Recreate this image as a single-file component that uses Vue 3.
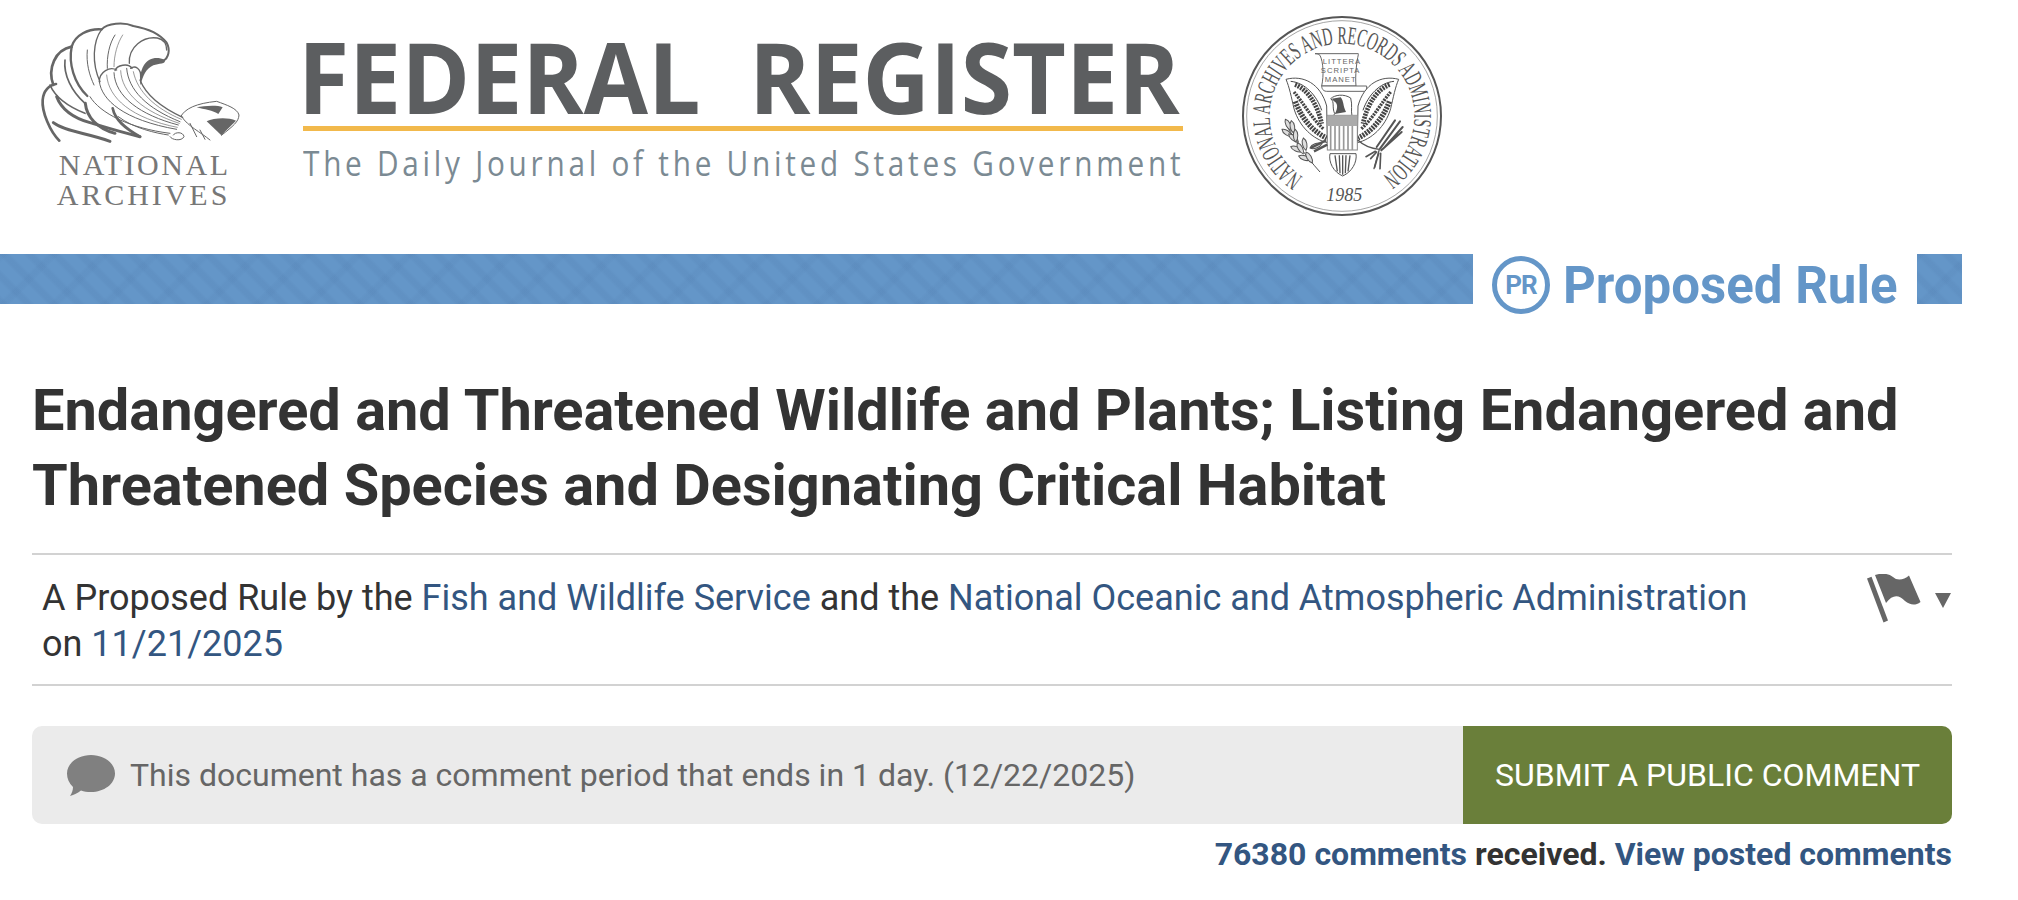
<script setup>
const leaves = [
  [196, 322, 62], [186, 352, 35], [214, 326, 80], [206, 366, 40], [226, 352, 88],
  [212, 404, 22], [232, 392, 62], [250, 378, 78], [236, 432, 18], [258, 420, 60], [270, 408, -20],
];
</script>

<template>
  <div class="page">
    <header class="masthead">
      <svg class="archives" viewBox="0 0 900 720" role="img" aria-label="National Archives">
        <g fill="none" stroke="#666" stroke-linecap="round" stroke-linejoin="round">
          <path stroke-width="8" d="M178 422C150 395 125 335 128 300C130 272 148 255 168 252" />
          <path stroke-width="8" d="M160 255C142 205 165 150 215 140" />
          <path stroke-width="7" d="M215 140C225 105 265 85 305 88" />
          <path stroke-width="6" d="M305 88C322 70 370 65 400 78C440 85 478 100 500 128C512 150 505 175 490 182" />
          <path stroke-width="4" d="M388 190C385 140 430 108 472 114C490 118 500 132 500 150" />
          <path stroke-width="7" d="M215 140C205 190 222 250 262 288" />
          <path stroke-width="5" d="M195 180C190 225 215 275 255 310" />
          <path stroke-width="5" d="M150 255C165 290 205 320 255 340" />
          <path stroke-width="9" d="M170 290C185 330 225 355 270 368C305 378 345 392 420 410" />
          <path stroke-width="9" d="M160 368C195 395 260 398 330 424" />
          <path stroke-width="9" d="M256 310C260 350 290 385 345 400" />
          <path stroke-width="8" d="M338 325C345 360 375 385 420 410" />
          <path stroke-width="4" d="M305 88C278 125 275 190 300 245" />
          <path stroke-width="3" d="M262 150C258 190 268 225 282 255" />
          <path stroke-width="3" d="M345 105C328 130 320 170 322 205" />
          <path stroke-width="2" d="M368 105C352 130 342 165 342 200" />
          <path stroke-width="4" d="M298 245C298 215 330 198 350 210" />
          <path stroke-width="4" d="M345 212C350 195 385 188 396 205" />
          <path stroke-width="4" d="M392 205C405 195 424 205 422 232" />
          <path stroke-width="3" d="M298 245C305 300 370 360 530 388" />
          <path stroke-width="2" d="M320 225C325 295 395 355 532 382" />
          <path stroke-width="3" d="M342 218C345 290 420 345 535 375" />
          <path stroke-width="2" d="M362 212C365 280 430 335 538 370" />
          <path stroke-width="3" d="M380 205C385 270 440 325 540 365" />
          <path stroke-width="2" d="M400 215C412 275 465 325 544 358" />
          <path stroke-width="4" d="M420 240C440 290 490 325 548 352" />
          <path stroke-width="3" d="M270 290C300 340 390 385 510 400" />
          <path stroke-width="3" d="M355 350C400 385 470 400 505 405" />
          <path stroke-width="3" d="M520 405C525 395 550 395 552 410C545 425 515 420 510 410" />
          <path fill="#666" stroke="none" d="M494 180C470 168 445 175 432 195C420 215 418 240 422 256C428 228 438 206 460 196C476 190 500 192 494 180Z" />
          <path stroke-width="3" d="M542 350C555 325 590 310 650 304C680 315 712 325 717 345C716 365 700 378 664 406" />
          <path fill="#666" stroke="none" d="M620 364C640 354 682 350 708 362L664 406Z" />
          <path fill="#666" stroke="none" d="M590 322C610 318 650 314 668 322L655 342C640 332 612 328 590 322Z" />
          <path stroke-width="3" d="M545 350C565 380 600 395 630 420M570 370L590 410M600 390L615 418" />
        </g>
        <text class="arch-text" x="430" y="525" text-anchor="middle" textLength="508" lengthAdjust="spacing">NATIONAL</text>
        <text class="arch-text" x="426" y="615" text-anchor="middle" textLength="512" lengthAdjust="spacing">ARCHIVES</text>
      </svg>

      <div class="wordmark">
        <div class="fr-title">FEDERAL&nbsp; REGISTER</div>
        <div class="fr-rule"></div>
        <div class="fr-tag">The Daily Journal of the United States Government</div>
      </div>

      <svg class="seal" viewBox="0 0 720 660" role="img" aria-label="National Archives and Records Administration seal">
        <defs>
          <path id="sealArc" d="M249.400 495A217 217 0 1 1 482.600 495" />
          <path id="sealLeaf" d="M0 0C8-9 28-9 38 0C28 9 8 9 0 0Z" />
          <g id="sealWing">
            <path fill="#fff" stroke="#555" stroke-width="3" d="M198 202C250 188 302 215 320 282L322 392C280 382 238 345 222 290C214 255 208 225 198 202Z" />
            <g fill="none" stroke="#444">
              <path stroke-width="14" stroke-dasharray="6 3" d="M225 218C262 232 292 275 305 335" />
              <path stroke-width="16" stroke-dasharray="6 3" d="M226 268C245 320 278 358 320 378" />
              <path stroke-width="10" stroke-dasharray="6 3" d="M222 240C250 272 275 320 312 352" />
              <path stroke-width="3" d="M212 208C255 212 290 250 305 295" />
            </g>
          </g>
        </defs>
        <circle cx="366" cy="312" r="297" fill="#fff" stroke="#555" stroke-width="6" />
        <circle cx="366" cy="312" r="286" fill="none" stroke="#777" stroke-width="2" />
        <text class="seal-ring"><textPath href="#sealArc" textLength="1112" lengthAdjust="spacingAndGlyphs">NATIONAL ARCHIVES AND RECORDS ADMINISTRATION</textPath></text>
        <text class="seal-year" x="373" y="568" text-anchor="middle">1985</text>

        <path fill="#fff" stroke="#666" stroke-width="3" d="M285 125H415V128C410 150 405 190 408 222H305C312 190 310 150 300 130C295 126 290 125 285 125Z" />
        <path fill="#fff" stroke="#666" stroke-width="3" d="M305 222H440V238H320C305 238 305 222 305 222Z" />
        <text class="scroll" x="366" y="156" text-anchor="middle">LITTERA</text>
        <text class="scroll" x="362" y="183" text-anchor="middle">SCRIPTA</text>
        <text class="scroll" x="362" y="210" text-anchor="middle">MANET</text>

        <use href="#sealWing" />
        <use href="#sealWing" transform="translate(734 0) scale(-1 1)" />

        <path fill="#fff" stroke="#555" stroke-width="3" d="M344 305C335 285 345 270 332 260C345 248 372 245 392 258C398 280 392 295 396 312H340Z" />
        <path fill="#555" d="M335 260L362 256C372 268 368 280 378 300L344 306C356 288 352 272 342 268Z" />

        <rect x="322" y="310" width="90" height="104" fill="#fff" stroke="#888" stroke-width="3" />
        <rect x="322" y="310" width="90" height="32" fill="#aaa" />
        <g stroke="#999" stroke-width="5">
          <path d="M332 342V414M345 342V414M358 342V414M371 342V414M384 342V414M397 342V414" />
        </g>

        <g fill="#fff" stroke="#555" stroke-width="3">
          <path d="M330 425C325 450 340 480 368 492C396 480 412 450 408 425Z" />
          <path fill="none" stroke-width="4" d="M345 430L352 478M368 430V488M390 430L384 478M358 430L360 484M378 430L376 484" />
        </g>

        <path fill="none" stroke="#555" stroke-width="3" d="M200 340C225 385 255 430 300 480" />
        <g fill="#ddd" stroke="#555" stroke-width="3">
          <use v-for="(leaf, i) in leaves" :key="i" href="#sealLeaf" :transform="`translate(${leaf[0]} ${leaf[1]}) rotate(${leaf[2]})`" />
        </g>
        <path fill="none" stroke="#555" stroke-width="7" d="M272 408L318 385M282 418L322 398" />

        <g fill="none" stroke="#555" stroke-linecap="round">
          <path stroke-width="4" d="M414 385C430 400 455 410 478 412M478 412L462 470" />
          <path stroke-width="6" d="M480 410L540 328M490 410L548 345M470 405L525 325M484 415L545 360" />
          <path stroke-width="5" d="M470 420L452 440M476 424L464 466M482 424L480 470M466 418L438 434" />
        </g>
      </svg>
    </header>

    <div class="band">
      <div class="band-fill"></div>
      <div class="doc-type">
        <span class="pr-badge">PR</span>
        <span class="doc-type-text">Proposed Rule</span>
      </div>
      <div class="band-end"></div>
    </div>

    <main class="main">
      <h1 class="title">Endangered and Threatened Wildlife and Plants; Listing Endangered and Threatened Species and Designating Critical Habitat</h1>

      <div class="byline">
        <p class="byline-text">
          A Proposed Rule by the <a>Fish and Wildlife Service</a> and the <a>National Oceanic and Atmospheric Administration</a><br />
          on <a>11/21/2025</a>
        </p>
        <div class="flag-menu">
          <svg class="flag" viewBox="0 0 54 54" aria-hidden="true">
            <path d="M0 4.500L4.500 2.700 21 46.500 16.500 48.500Z" />
            <path d="M8 1C14-1 21-1 26 3C30 7 37 6 42 1.500L53.500 28C48 32 43 31 38 27C32 21 26 20 19 29Z" />
          </svg>
          <span class="caret"></span>
        </div>
      </div>

      <div class="comment-bar">
        <div class="comment-info">
          <svg class="bubble" viewBox="0 0 48 42" aria-hidden="true">
            <path d="M24 0C37 0 48 8 48 18.500C48 29 37 37 24 37C20 37 17 36.500 14 35.500C11 38 7 40 3 41C5 38 6 35 6 32C2 28 0 24 0 18.500C0 8 11 0 24 0Z" />
          </svg>
          <span>This document has a comment period that ends in 1 day. (12/22/2025)</span>
        </div>
        <a class="comment-btn">SUBMIT A PUBLIC COMMENT</a>
      </div>

      <p class="counts"><a>76380 comments</a> received. <a>View posted comments</a></p>
    </main>
  </div>
</template>

<style>
html, body { margin: 0; background: #fff; overflow: hidden; }
</style>

<style scoped>
.page {
  width: 2018px;
  height: 900px;
  font-family: Roboto, "Liberation Sans", sans-serif;
  color: #333;
  background: #fff;
  overflow: hidden;
}
.masthead {
  height: 254px;
  display: flex;
  align-items: flex-start;
}
.archives {
  width: 300px;
  height: 240px;
  flex: none;
}
.arch-text {
  font-family: "Liberation Serif", serif;
  font-size: 90px;
  fill: #777;
}
.wordmark {
  width: 880px;
  margin-left: 3px;
  padding-top: 26px;
  flex: none;
}
.fr-title {
  font-family: "Open Sans", sans-serif;
  font-size: 98px;
  font-weight: 700;
  line-height: 100px;
  color: #5c5e60;
  white-space: nowrap;
  margin-left: -5px;
  transform-origin: left center;
  transform: scaleX(0.95);
}
.fr-rule {
  height: 5px;
  background: #f2b94c;
}
.fr-tag {
  font-family: "Open Sans", sans-serif;
  font-size: 35px;
  line-height: 48px;
  margin-top: 8px;
  color: #7b8a93;
  white-space: nowrap;
  letter-spacing: 4.400px;
  transform-origin: left center;
  transform: scaleX(0.85);
}
.seal {
  width: 240px;
  height: 220px;
  flex: none;
  margin: 12px 0 0 37px;
}
.seal-ring {
  font-family: "Liberation Serif", serif;
  font-size: 76px;
  fill: #555;
}
.seal-year {
  font-family: "Liberation Serif", serif;
  font-style: italic;
  font-size: 54px;
  fill: #555;
}
.scroll {
  font-family: "Liberation Sans", sans-serif;
  font-size: 23px;
  letter-spacing: 3px;
  fill: #666;
}
.band {
  height: 50px;
  display: flex;
  align-items: stretch;
}
.band-fill, .band-end {
  background-color: #6496c8;
  background-image:
    repeating-linear-gradient(45deg, rgba(70, 110, 160, 0.12) 0 4px, transparent 7px 15px, rgba(70, 110, 160, 0.12) 18px),
    repeating-linear-gradient(135deg, rgba(70, 110, 160, 0.09) 0 4px, transparent 7px 33px, rgba(70, 110, 160, 0.09) 36px);
}
.band-fill {
  width: 1473px;
}
.band-end {
  width: 45px;
  margin-left: 20px;
}
.doc-type {
  display: flex;
  align-items: center;
  margin-left: 19px;
  width: 405px;
  height: 62px;
  gap: 13px;
}
.pr-badge {
  width: 58px;
  height: 58px;
  box-sizing: border-box;
  border: 5px solid #6496c8;
  border-radius: 50%;
  color: #6496c8;
  font-size: 26px;
  font-weight: 700;
  letter-spacing: -1px;
  display: flex;
  align-items: center;
  justify-content: center;
  flex: none;
}
.doc-type-text {
  color: #6496c8;
  font-size: 51px;
  font-weight: 700;
  white-space: nowrap;
}
.main {
  padding: 0 66px 0 32px;
}
.title {
  margin: 69px 0 0;
  font-size: 57.700px;
  font-weight: 700;
  line-height: 75px;
  color: #333;
  width: 1890px;
}
.byline {
  margin-top: 30px;
  border-top: 2px solid #d2d2d2;
  border-bottom: 2px solid #d2d2d2;
  height: 129px;
  padding: 0 0 0 10px;
  display: flex;
  justify-content: space-between;
}
.byline-text {
  margin: 20px 0 0;
  font-size: 36px;
  line-height: 46px;
  color: #333;
}
a {
  color: #335681;
}
.flag-menu {
  display: flex;
  align-items: flex-start;
  padding-top: 19px;
}
.flag {
  width: 54px;
  height: 54px;
  fill: #666;
}
.caret {
  width: 0;
  height: 0;
  margin: 19px 1px 0 14px;
  border-left: 8.500px solid transparent;
  border-right: 8.500px solid transparent;
  border-top: 15px solid #666;
}
.comment-bar {
  margin-top: 40px;
  height: 98px;
  display: flex;
  border-radius: 10px;
  overflow: hidden;
  background: #ebebeb;
}
.comment-info {
  flex: 1;
  display: flex;
  align-items: center;
  padding-left: 35px;
  gap: 15px;
  font-size: 32px;
  color: #666;
}
.bubble {
  width: 48px;
  height: 42px;
  fill: #808080;
  flex: none;
  margin-top: 2px;
}
.comment-btn {
  width: 489px;
  background: #6a7f3a;
  color: #fff;
  font-size: 32px;
  display: flex;
  align-items: center;
  justify-content: center;
}
.counts {
  margin: 12px 0 0;
  text-align: right;
  font-size: 32px;
  font-weight: 700;
  line-height: 36px;
  color: #333;
}
</style>
